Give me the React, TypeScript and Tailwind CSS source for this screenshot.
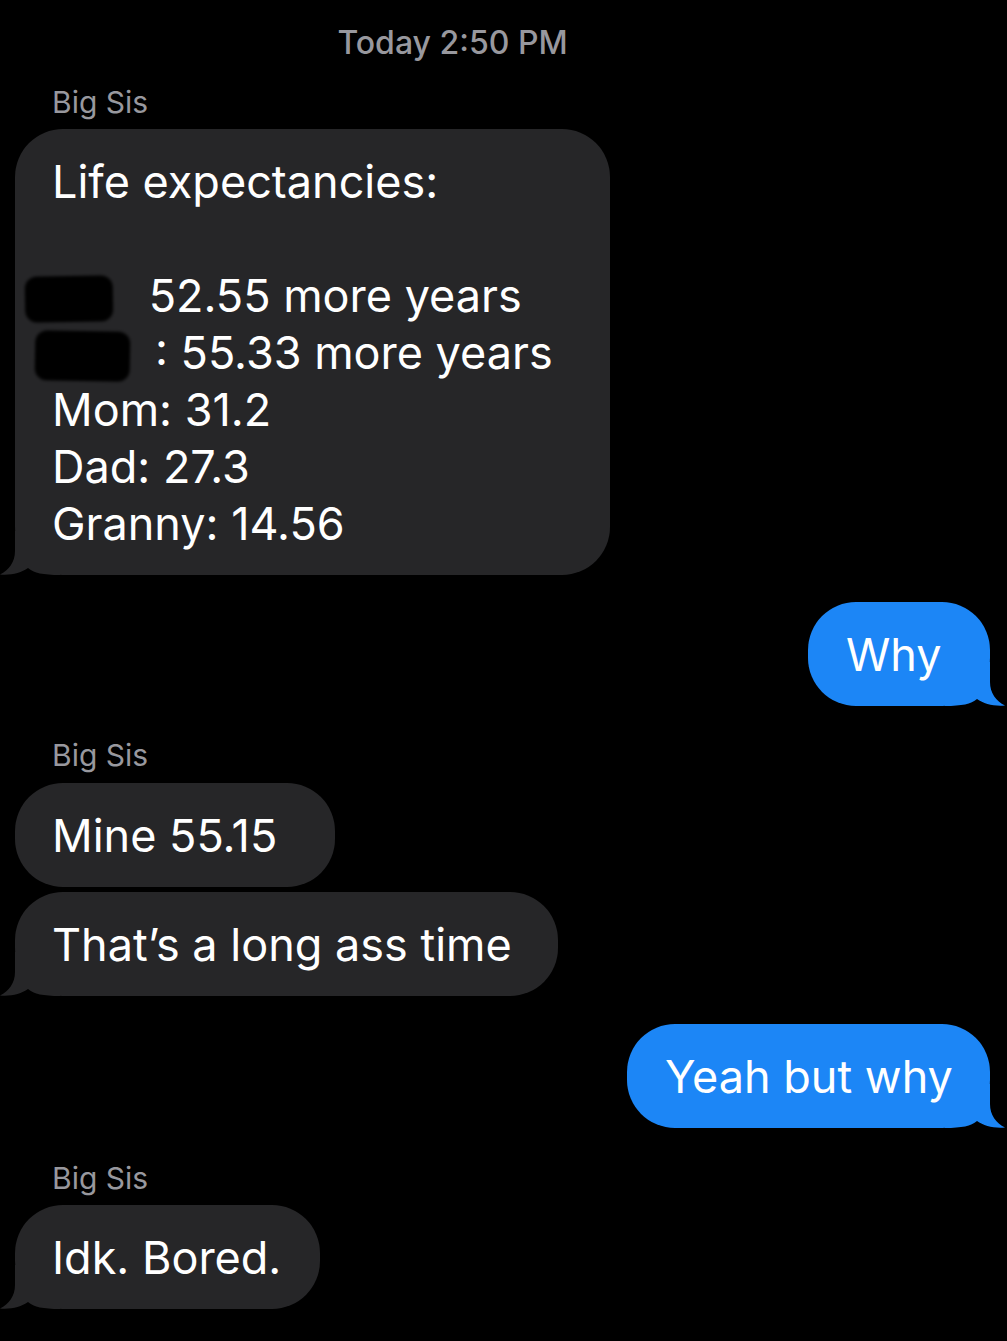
import type { ReactNode } from "react"

const font = { fontFamily: "Inter, 'Noto Sans', sans-serif" }

function Tail({ side, fill }: { side: "in" | "out"; fill: string }) {
  if (side === "in") {
    return (
      <svg className="absolute bottom-0 left-[-15px]" width="60" height="44" viewBox="0 0 60 44">
        <path d="M15 0 L15 20 C15 31 9 39 0 43.5 C11 44.5 21 42 28 37 C34 42 43 44 60 44 L60 0 Z" fill={fill} />
      </svg>
    )
  }
  return (
    <svg className="absolute bottom-0 right-[-15px]" width="60" height="44" viewBox="0 0 60 44">
      <path d="M45 0 L45 20 C45 31 51 39 60 43.5 C49 44.5 39 42 32 37 C26 42 17 44 0 44 L0 0 Z" fill={fill} />
    </svg>
  )
}

function Received({ children, tail, className = "" }: { children: ReactNode; tail?: boolean; className?: string }) {
  return (
    <div className={`relative self-start rounded-[48px] bg-[#262628] pt-[24px] pb-[23px] pl-[37px] text-[45px] leading-[57px] text-white ${className}`}>
      {tail && <Tail side="in" fill="#262628" />}
      <div className="relative">{children}</div>
    </div>
  )
}

function Sent({ children, className = "" }: { children: ReactNode; className?: string }) {
  return (
    <div className={`relative self-end rounded-[48px] bg-[#1c86f6] pt-[24px] pb-[23px] pl-[38px] text-[45px] leading-[57px] text-white ${className}`}>
      <Tail side="out" fill="#1c86f6" />
      <div className="relative">{children}</div>
    </div>
  )
}

function Redacted({ width, blob }: { width: string; blob: string }) {
  return (
    <span className={`relative inline-block ${width} h-[40px] align-middle`}>
      <span className={`absolute ${blob} rounded-[12px] bg-black blur-[1.5px]`} />
    </span>
  )
}

export default function App() {
  return (
    <div className="flex h-[1341px] w-full flex-col bg-black pr-[17px] pl-[15px]" style={font}>
      <div className="mr-[100px] pt-[22px] text-center text-[32px] leading-[42px] font-medium text-[#98989e]">
        Today 2:50 PM
      </div>

      <div className="mt-[18px] pl-[37px] text-[30px] leading-[40px] text-[#98989e]">Big Sis</div>
      <Received tail className="mt-[7px] w-[595px]">
        <div>Life expectancies:</div>
        <div>&nbsp;</div>
        <div>
          <Redacted width="w-[84px]" blob="left-[-27px] right-[23px] top-[-4px] h-[46px] -rotate-1" /> 52.55 more years
        </div>
        <div>
          <Redacted width="w-[103px]" blob="left-[-17px] right-[25px] top-[-6px] h-[50px] rotate-1" />: 55.33 more years
        </div>
        <div>Mom: 31.2</div>
        <div>Dad: 27.3</div>
        <div>Granny: 14.56</div>
      </Received>

      <Sent className="mt-[27px] w-[182px]">Why</Sent>

      <div className="mt-[29px] pl-[37px] text-[30px] leading-[40px] text-[#98989e]">Big Sis</div>
      <Received className="mt-[8px] w-[320px]">Mine 55.15</Received>
      <Received tail className="mt-[5px] w-[543px]">That’s a long ass time</Received>

      <Sent className="mt-[28px] w-[363px]">Yeah but why</Sent>

      <div className="mt-[30px] pl-[37px] text-[30px] leading-[40px] text-[#98989e]">Big Sis</div>
      <Received tail className="mt-[7px] w-[305px]">Idk. Bored.</Received>
    </div>
  )
}
